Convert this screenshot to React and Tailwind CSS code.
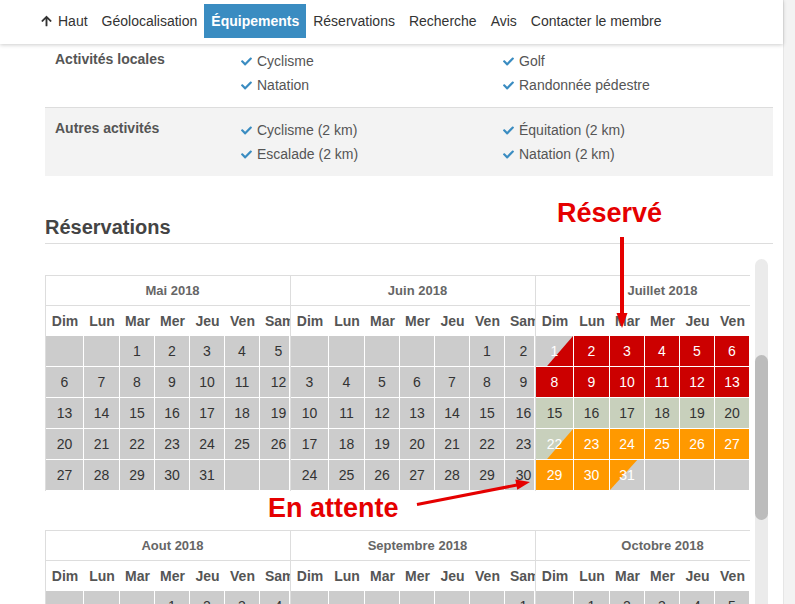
import React from 'react';
import { FaCheck, FaArrowUp } from 'react-icons/fa';

const COLS = 'grid-cols-[38px_36px_35px_35px_35px_35px_30px]';
const DAYS = ['Dim', 'Lun', 'Mar', 'Mer', 'Jeu', 'Ven', 'Sam'];

const GRAY = 'bg-[#cccccc] text-[#333]';
const RED = 'bg-[#cc0000] text-white';
const ORANGE = 'bg-[#ff9900] text-white';
const SAGE = 'bg-[#c8d0bc] text-[#333]';

// statut des jours de juillet (réservé / libre / en attente)
const julyCell = (d) => {
  if (d === 1) return { cls: 'bg-[#cccccc] text-white', tri: 'br', triBg: 'bg-[#cc0000]' };
  if (d <= 14) return { cls: RED };
  if (d <= 21) return { cls: SAGE };
  if (d === 22) return { cls: 'bg-[#c8d0bc] text-white', tri: 'br', triBg: 'bg-[#ff9900]' };
  if (d <= 30) return { cls: ORANGE };
  return { cls: 'bg-[#cccccc] text-white', tri: 'tl', triBg: 'bg-[#ff9900]' };
};

const group1 = [
  { name: 'Mai 2018', start: 2, days: 31 },
  { name: 'Juin 2018', start: 5, days: 30 },
  { name: 'Juillet 2018', start: 0, days: 31, status: julyCell },
];

const group2 = [
  { name: 'Aout 2018', start: 3, days: 31 },
  { name: 'Septembre 2018', start: 6, days: 30 },
  { name: 'Octobre 2018', start: 1, days: 31 },
];

const Cell = ({ day, info, last }) => {
  const cls = info ? info.cls : GRAY;
  return (
    <div
      className={`relative h-[31px] border-r border-b border-white flex items-center justify-center text-[14px] ${cls} ${last ? 'pl-2' : ''}`}
    >
      {info && info.tri === 'br' && (
        <span className={`absolute inset-0 ${info.triBg} [clip-path:polygon(100%_0,100%_100%,30%_100%)]`} />
      )}
      {info && info.tri === 'tl' && (
        <span className={`absolute inset-0 ${info.triBg} [clip-path:polygon(0_0,80%_0,0_100%)]`} />
      )}
      <span className="relative">{day}</span>
    </div>
  );
};

const Month = ({ month }) => {
  const total = Math.ceil((month.start + month.days) / 7) * 7;
  const cells = [];
  for (let i = 0; i < total; i++) {
    const d = i - month.start + 1;
    const valid = d >= 1 && d <= month.days;
    const info = valid && month.status ? month.status(d) : null;
    cells.push(<Cell key={i} day={valid ? d : ''} info={info} last={i % 7 === 6} />);
  }
  return (
    <div className="w-[245px] shrink-0 border-l border-t border-[#ddd] bg-white">
      <div className="h-[30px] border-b border-[#ddd] flex items-center justify-center pl-[9px] text-[13px] font-bold text-[#666] whitespace-nowrap">
        {month.name}
      </div>
      <div className={`grid ${COLS} h-[30px]`}>
        {DAYS.map((d) => (
          <div key={d} className="px-[5px] overflow-hidden whitespace-nowrap text-center font-bold text-[14px] text-[#555] leading-[30px]">
            {d}
          </div>
        ))}
      </div>
      <div className={`grid ${COLS}`}>{cells}</div>
    </div>
  );
};

const Item = ({ children }) => (
  <div className="flex items-center gap-[4px] leading-[24px] whitespace-nowrap">
    <FaCheck className="w-[13px] h-[11px] text-[#3a8cc1]" />
    <span>{children}</span>
  </div>
);

const NavLink = ({ children, active }) => (
  <a
    className={`h-[34px] px-[7px] flex items-center gap-[6px] ${active ? 'bg-[#3a8cc1] text-white font-bold' : 'text-[#333]'}`}
  >
    {children}
  </a>
);

export default function App() {
  return (
    <div className="relative w-[795px] h-[604px] overflow-hidden flex bg-white font-['Liberation_Sans',Arial,sans-serif]">
      <div className="w-[783px] flex flex-col">
        <nav className="relative z-10 h-[44px] shrink-0 bg-white shadow-[0_1px_4px_rgba(0,0,0,0.2)] flex items-start pt-[4px] pl-[34px] text-[14px]">
          <NavLink>
            <FaArrowUp className="w-[11px] h-[12px]" />
            Haut
          </NavLink>
          <NavLink>Géolocalisation</NavLink>
          <NavLink active>Équipements</NavLink>
          <NavLink>Réservations</NavLink>
          <NavLink>Recherche</NavLink>
          <NavLink>Avis</NavLink>
          <NavLink>Contacter le membre</NavLink>
        </nav>

        <div className="pl-[45px] pr-[10px] text-[14px] text-[#555]">
          <div className="flex pt-[5px] pb-[10px] border-b border-[#ddd]">
            <div className="w-[195px] pl-[10px] font-bold leading-[20px]">Activités locales</div>
            <div className="w-[262px]">
              <Item>Cyclisme</Item>
              <Item>Natation</Item>
            </div>
            <div>
              <Item>Golf</Item>
              <Item>Randonnée pédestre</Item>
            </div>
          </div>
          <div className="flex pt-[10px] pb-[10px] bg-[#f3f3f3]">
            <div className="w-[195px] pl-[10px] font-bold leading-[20px]">Autres activités</div>
            <div className="w-[262px]">
              <Item>Cyclisme (2 km)</Item>
              <Item>Escalade (2 km)</Item>
            </div>
            <div>
              <Item>Équitation (2 km)</Item>
              <Item>Natation (2 km)</Item>
            </div>
          </div>

          <h2 className="mt-[40px] pb-[5px] border-b border-[#ddd] text-[20px] leading-[22px] font-bold text-[#444]">
            Réservations
          </h2>

          <div className="mt-[15px] flex h-[400px]">
            <div className="w-[705px] overflow-hidden pt-[16px] flex flex-col gap-[39px]">
              <div className="flex">
                {group1.map((m) => (
                  <Month key={m.name} month={m} />
                ))}
              </div>
              <div className="flex">
                {group2.map((m) => (
                  <Month key={m.name} month={m} />
                ))}
              </div>
            </div>
            <div className="ml-[5px] w-[13px] rounded-full bg-[#ebebeb] flex flex-col">
              <div className="mt-[96px] h-[165px] rounded-full bg-[#bcbcbc]" />
            </div>
          </div>
        </div>
      </div>
      <div className="w-[12px] bg-[#f3f3f3] border-l border-[#e6e6e6]" />

      {/* annotations */}
      <div className="absolute left-[557px] top-[200px] text-[27px] leading-none font-bold text-[#e50000]">Réservé</div>
      <div className="absolute left-[268px] top-[495px] text-[27px] leading-none font-bold text-[#e50000]">En attente</div>
      <svg className="absolute inset-0 pointer-events-none" width="795" height="604" viewBox="0 0 795 604">
        <line x1="622" y1="237" x2="622" y2="316" stroke="#e50000" strokeWidth="4" />
        <polygon points="616.5,313 627.5,313 622,328" fill="#e50000" />
        <line x1="417" y1="504.5" x2="517" y2="485" stroke="#e50000" strokeWidth="3" />
        <polygon points="517.3,489.8 515.3,479.6 530,482" fill="#e50000" />
      </svg>
    </div>
  );
}
